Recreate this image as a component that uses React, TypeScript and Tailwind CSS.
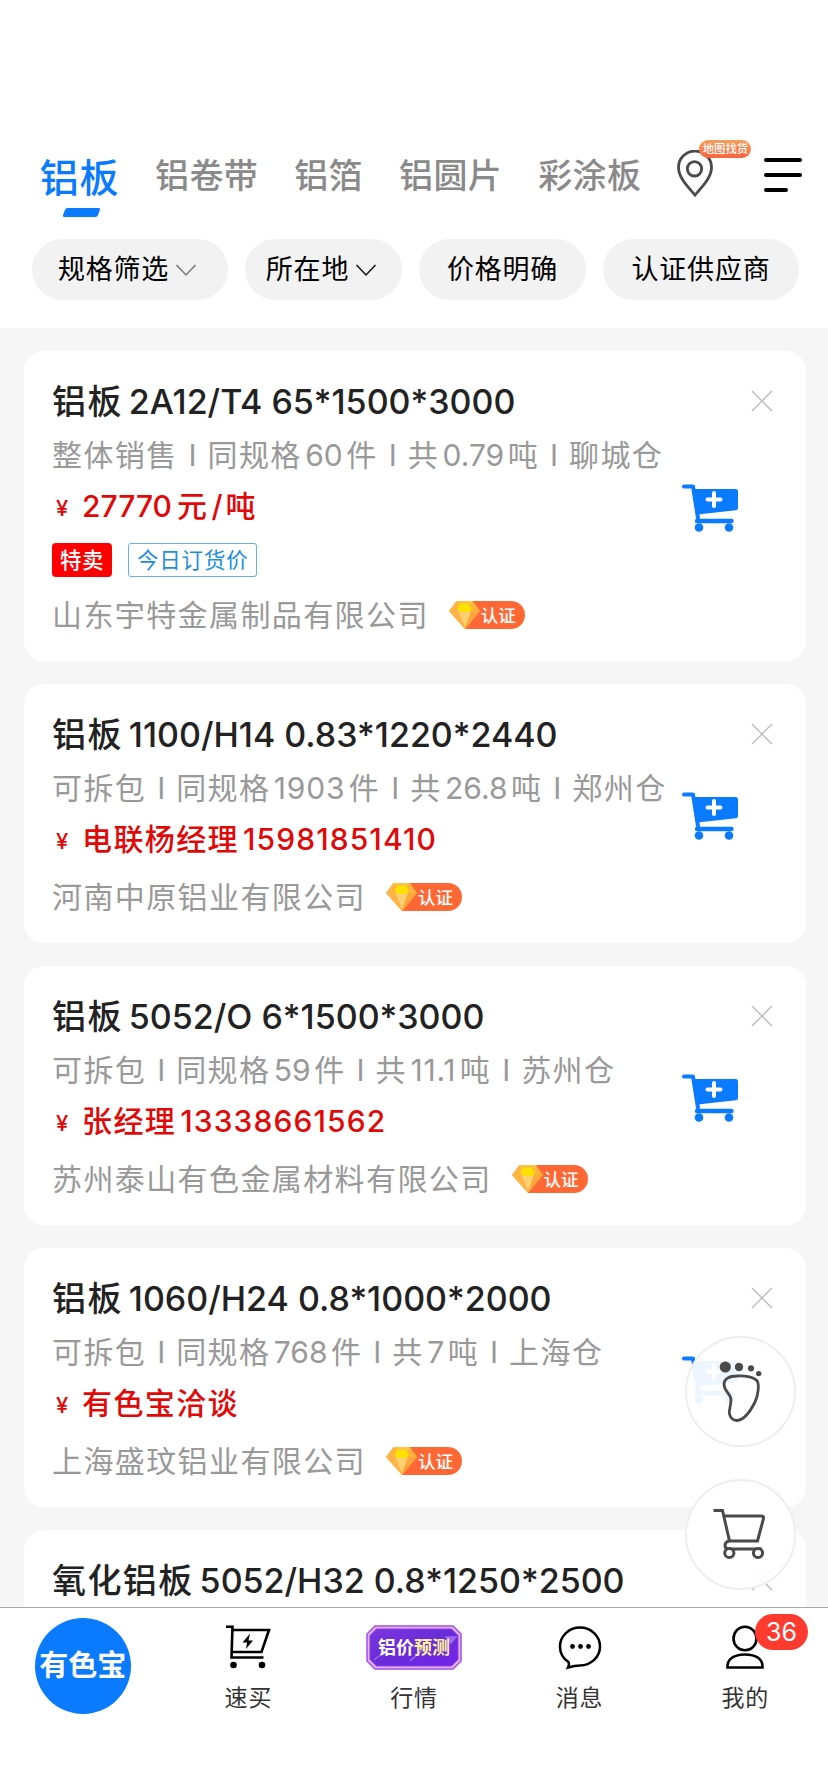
type Item = {
  title: string;
  info?: string;
  price?: string;
  company?: string;
  tags?: boolean;
};

const tabs = ["铝卷带", "铝箔", "铝圆片", "彩涂板"];

const items: Item[] = [
  {
    title: "铝板2A12/T4 65*1500*3000",
    info: "整体销售 I 同规格60件 I 共0.79吨 I 聊城仓",
    price: "27770元/吨",
    company: "山东宇特金属制品有限公司",
    tags: true,
  },
  {
    title: "铝板1100/H14 0.83*1220*2440",
    info: "可拆包 I 同规格1903件 I 共26.8吨 I 郑州仓",
    price: "电联杨经理15981851410",
    company: "河南中原铝业有限公司",
  },
  {
    title: "铝板5052/O 6*1500*3000",
    info: "可拆包 I 同规格59件 I 共11.1吨 I 苏州仓",
    price: "张经理13338661562",
    company: "苏州泰山有色金属材料有限公司",
  },
  {
    title: "铝板1060/H24 0.8*1000*2000",
    info: "可拆包 I 同规格768件 I 共7吨 I 上海仓",
    price: "有色宝洽谈",
    company: "上海盛玟铝业有限公司",
  },
  {
    title: "氧化铝板5052/H32 0.8*1250*2500",
  },
];

// spacing for a run of latin text, depending on what it holds
function latinClass(part: string) {
  if (part === " I ") return "mx-[2.5px]";
  if (part === "/") return "mx-[3px]";
  if (part.length === 11) return "mx-[4px] tracking-[1.1px]";
  if (part.includes("*")) return "ml-[6px]";
  if (part.startsWith("1")) return "mx-[3.5px] tracking-[0.8px]";
  return "mx-[3.5px]";
}

// Chinese runs get a little tracking, latin runs get a gap on each side
function Mixed({ text }: { text: string }) {
  const parts = text.split(/([\u4e00-\u9fff]+)/).filter(Boolean);
  return (
    <>
      {parts.map((part, i) => (
        <span key={i} className={/[\u4e00-\u9fff]/.test(part) ? "tracking-[1.4px]" : i === 0 ? "mr-[5px]" : latinClass(part)}>
          {part}
        </span>
      ))}
    </>
  );
}

function Chevron({ color }: { color: string }) {
  return (
    <svg width="22" height="14" viewBox="0 0 22 14" fill="none" className="ml-1.5">
      <path d="M1.5 2L11 12L20.5 2" stroke={color} strokeWidth="1.5" />
    </svg>
  );
}

function BuyCart() {
  return (
    <svg width="56" height="48" viewBox="0 0 56 48" className="mt-1 shrink-0">
      <path d="M2 2.5H11L16 34" fill="none" stroke="#0a7aff" strokeWidth="4" strokeLinecap="round" strokeLinejoin="round" />
      <path d="M10 5H53.5Q56 5 56 7.5V24Q56 26 54 26.3L15.5 30.5Z" fill="#0a7aff" />
      <path d="M15 37H49.5" stroke="#0a7aff" strokeWidth="4.4" strokeLinecap="round" />
      <circle cx="17" cy="43.5" r="4.3" fill="#0a7aff" />
      <circle cx="47" cy="43.5" r="4.3" fill="#0a7aff" />
      <path d="M25.5 15.5H38.5M32 9V22" stroke="#fff" strokeWidth="4" strokeLinecap="round" />
    </svg>
  );
}

function Certified() {
  return (
    <div className="relative ml-[20px] h-7 w-[76px] shrink-0">
      <svg width="76" height="28" viewBox="0 0 76 28" className="block">
        <path d="M16 0H62A14 14 0 0 1 62 28H16Z" fill="#ff6834" />
        <path d="M7.5 0H24L31 10L16 28L0 10Z" fill="#fdb43c" />
        <path d="M7.5 0H24L22 3L10 3Z" fill="#f9c63d" />
        <path d="M0 10L7.5 0L9.5 10L16 28Z" fill="#ffb348" />
        <path d="M22 10H31L16 28Z" fill="#ffa53d" />
        <path d="M9.5 10L22 10L16 26Z" fill="#ffd071" />
        <path d="M11 3H20L23 8L20 11H12L8 8Z" fill="#ffe100" />
      </svg>
      <span className="absolute left-8 top-0 text-[17.5px] font-medium leading-[29px] text-white">认证</span>
    </div>
  );
}

function Card({ item }: { item: Item }) {
  return (
    <div className="mb-[23px] flex rounded-[20px] bg-white pb-6 pl-7 pr-[33px] pt-6 whitespace-nowrap">
      <div className="flex w-[630px] shrink-0 flex-col">
        <h2 className="h-[52px] text-[34px] font-medium leading-[53px] text-[#222]">
          <Mixed text={item.title} />
        </h2>
        {item.info && (
          <p className="h-14 text-[30px] leading-[56px] text-[#999]">
            <Mixed text={item.info} />
          </p>
        )}
        {item.price && (
          <div className="flex h-[46px] items-center font-medium leading-[46px] text-[#e10808]">
            <span className="w-[30px] pl-1 pt-1 text-[22px]">¥</span>
            <span className="text-[30px]">
              <Mixed text={item.price} />
            </span>
          </div>
        )}
        {item.tags && (
          <div className="mb-[3px] mt-[14px] flex h-[34px] gap-4 text-[21.5px] leading-[32px]">
            <span className="w-[60px] rounded-[4px] bg-[#f00] pl-2 font-medium leading-[34px] tracking-[0.5px] text-white">特卖</span>
            <span className="w-[129px] rounded-[3px] border border-[#62b2e2] pl-2 tracking-[0.8px] text-[#1c8fde]">今日订货价</span>
          </div>
        )}
        {item.company && (
          <div className="mt-[13px] flex h-11 items-center text-[30px] text-[#999]">
            <span className="tracking-[1.4px]">{item.company}</span>
            <Certified />
          </div>
        )}
      </div>
      <div className="flex flex-1 items-center">{item.price && <BuyCart />}</div>
      <svg width="22" height="22" viewBox="0 0 22 22" className="mt-[15px] shrink-0">
        <path d="M1 1L21 21M21 1L1 21" stroke="#bbb" strokeWidth="1.4" />
      </svg>
    </div>
  );
}

function Header() {
  return (
    <header className="h-[328px] shrink-0 bg-white pt-[140px]">
      <div className="flex h-[99px] pl-10 whitespace-nowrap">
        <div className="flex w-[79px] flex-col items-center text-[39px] font-medium tracking-[0.8px] text-[#0a7aff]">
          <span className="h-[68px] leading-[75px]">铝板</span>
          <i className="ml-[4px] block h-[9px] w-[35px] -skew-x-[20deg] rounded-[2px] bg-[#0a7aff]" />
        </div>
        {tabs.map((tab) => (
          <span key={tab} className="ml-9 h-[74px] text-[34px] font-medium leading-[71px] tracking-[0.4px] text-[#8a8a8a]">
            {tab}
          </span>
        ))}
        <div className="relative ml-9 mt-[10px] h-[47px] w-9">
          <svg width="36" height="47" viewBox="0 0 36 47" fill="none" stroke="#4a4a4a" strokeWidth="2.8">
            <path d="M18 45C12 38 1.5 28 1.5 17.5A16.5 16.5 0 0 1 34.5 17.5C34.5 28 24 38 18 45Z" />
            <circle cx="17.5" cy="18.8" r="7.2" />
          </svg>
          <span className="absolute -top-[10px] left-[22px] h-[18px] w-[52px] rounded-full bg-gradient-to-b from-[#f4a05c] to-[#f8633f] text-center text-[11.3px] font-medium leading-[18px] text-white">
            地图找货
          </span>
        </div>
        <div className="ml-[51px] mt-[18px] flex flex-col gap-[11px]">
          <i className="block h-1 w-[38px] rounded-full bg-black" />
          <i className="block h-1 w-[38px] rounded-full bg-black" />
          <i className="block h-1 w-6 rounded-full bg-black" />
        </div>
      </div>
      <div className="flex h-[61px] gap-[17px] pl-8 text-[27px] leading-none tracking-[0.8px] text-black whitespace-nowrap">
        <button className="flex w-[196px] items-center justify-center rounded-full bg-[#f2f2f2] pr-[5px]">
          规格筛选
          <Chevron color="#777" />
        </button>
        <button className="flex w-[157px] items-center justify-center rounded-full bg-[#f2f2f2] pr-[4px]">
          所在地
          <Chevron color="#111" />
        </button>
        <button className="w-[167px] rounded-full bg-[#f2f2f2]">价格明确</button>
        <button className="w-[196px] rounded-full bg-[#f2f2f2]">认证供应商</button>
      </div>
    </header>
  );
}

function Floating() {
  return (
    <div className="absolute right-8 top-[1336px] flex flex-col gap-8">
      <button className="flex size-[111px] items-center justify-center rounded-full border-2 border-[#eee] bg-white/93">
        <svg width="111" height="111" viewBox="0 0 111 111" fill="none" className="shrink-0">
          <circle cx="40.3" cy="31" r="5.6" fill="#4a4a4a" />
          <circle cx="54" cy="31" r="4.2" fill="#4a4a4a" />
          <circle cx="66" cy="32.3" r="3.1" fill="#4a4a4a" />
          <circle cx="73.7" cy="37.6" r="2.7" fill="#4a4a4a" />
          <path
            d="M52 40C44 40 39 43 39 48C39 56 46 57 46 64C46 69 44 74 44.3 77C45 81.500 48 84.500 52 84.500C59 84 66 74 70 66C73.500 59 74 49 72.500 45.500C70 41 60 39.500 52 40Z"
            stroke="#4a4a4a"
            strokeWidth="2.8"
          />
        </svg>
      </button>
      <button className="flex size-[111px] items-center justify-center rounded-full border-2 border-[#eee] bg-white/93">
        <svg width="111" height="111" viewBox="0 0 111 111" fill="none" stroke="#4a4a4a" strokeWidth="3" className="shrink-0">
          <path d="M28.500 31.500H37.500L44.500 62" />
          <path d="M38.500 37H76Q79 37 78.500 39.500L72.500 62H44Q40 63 40 66.500Q40 70 44 70H77" />
          <circle cx="44.300" cy="74" r="4.600" fill="#fff" />
          <circle cx="73" cy="74" r="4.600" fill="#fff" />
        </svg>
      </button>
    </div>
  );
}

function TabBar() {
  return (
    <nav className="grid h-[185px] shrink-0 grid-cols-5 border-t border-[#a8a8a8] bg-white text-[23px] text-[#333]">
      <div className="flex justify-center pt-[10px]">
        <div className="flex size-24 items-center justify-center rounded-full bg-[#0a7aff] text-[29px] font-bold text-white">有色宝</div>
      </div>
      <div className="flex flex-col items-center pt-[17px]">
        <svg width="46" height="45" viewBox="0 0 46 45" fill="none" stroke="#000" strokeWidth="2.6">
          <path d="M1 1.800H7.500L6.500 32.500H38.500" />
          <path d="M7.500 5H44L36.500 27H7" />
          <path d="M25 8.500L17.500 17.500H22L21 24L28 15.500H23.500Z" fill="#000" stroke="none" />
          <circle cx="8.500" cy="40" r="3.300" fill="#000" stroke="none" />
          <circle cx="37" cy="40" r="3.300" fill="#000" stroke="none" />
        </svg>
        <span className="mt-[10px] leading-9 tracking-[0.8px]">速买</span>
      </div>
      <div className="flex flex-col items-center pt-[17px]">
        <div className="relative h-[45px] w-24">
          <svg width="96" height="45" viewBox="0 0 96 45" className="block">
            <defs>
              <linearGradient id="plate" x1="0" y1="0" x2="1" y2="1">
                <stop offset="0" stopColor="#7b35dc" />
                <stop offset="0.500" stopColor="#6a2bd8" />
                <stop offset="1" stopColor="#7423ec" />
              </linearGradient>
            </defs>
            <path d="M9 1H87L95 9V36L87 44H9L1 36V9Z" fill="#e3b8fa" stroke="#a74ce8" strokeWidth="1.500" />
            <path d="M10.500 4H85.500L92 10.500V34.500L85.500 41H10.500L4 34.500V10.500Z" fill="url(#plate)" stroke="#8c3be0" />
            <path d="M8 35L18 27M44 36L60 22M80 12H90L85 18Z" fill="#9a69ee" stroke="#9a69ee" strokeWidth="1.500" />
          </svg>
          <div className="absolute inset-0 flex items-center justify-center text-[18px] font-bold leading-none text-white">
            <span>铝价</span>
            <span className="text-[#fdf19a]">预测</span>
          </div>
        </div>
        <span className="mt-[10px] leading-9 tracking-[0.8px]">行情</span>
      </div>
      <div className="flex flex-col items-center pt-[17px]">
        <svg width="44" height="45" viewBox="0 0 44 45" fill="none" stroke="#000" strokeWidth="2.500">
          <path d="M10.500 37C5 33.500 2 28 2 21.500A20 19 0 0 1 42 21.500C42 32 33 40.500 22 40.500C18 40.500 15 41 10 42.500C11 40.500 11.500 39 10.500 37Z" />
          <circle cx="14.500" cy="21.500" r="2.400" fill="#000" stroke="none" />
          <circle cx="22.500" cy="21.500" r="2.400" fill="#000" stroke="none" />
          <circle cx="30.500" cy="21.500" r="2.400" fill="#000" stroke="none" />
        </svg>
        <span className="mt-[10px] leading-9 tracking-[0.8px]">消息</span>
      </div>
      <div className="relative flex flex-col items-center pt-[17px]">
        <svg width="40" height="45" viewBox="0 0 40 45" fill="none" stroke="#000" strokeWidth="2.600">
          <ellipse cx="20" cy="13.500" rx="11.500" ry="11.800" />
          <path d="M2.500 42.500C2 34 9 29.500 20 29.500C31 29.500 38 34 37.500 42.500Z" />
        </svg>
        <span className="mt-[10px] leading-9 tracking-[0.8px]">我的</span>
        <span className="absolute right-5 top-[6px] h-9 w-[53px] rounded-full bg-[#ff3b30] text-center text-[25px] leading-9 text-white">36</span>
      </div>
    </nav>
  );
}

function App() {
  return (
    <div className="relative flex h-[1792px] w-[828px] flex-col overflow-hidden bg-[#f6f6f6] font-['Inter','Noto_Sans_CJK_SC',sans-serif] [font-feature-settings:'calt'_0]">
      <Header />
      <main className="min-h-0 flex-1 overflow-hidden pl-6 pr-[22px] pt-[23px]">
        {items.map((item) => (
          <Card key={item.title} item={item} />
        ))}
      </main>
      <Floating />
      <TabBar />
    </div>
  );
}

export default App;
